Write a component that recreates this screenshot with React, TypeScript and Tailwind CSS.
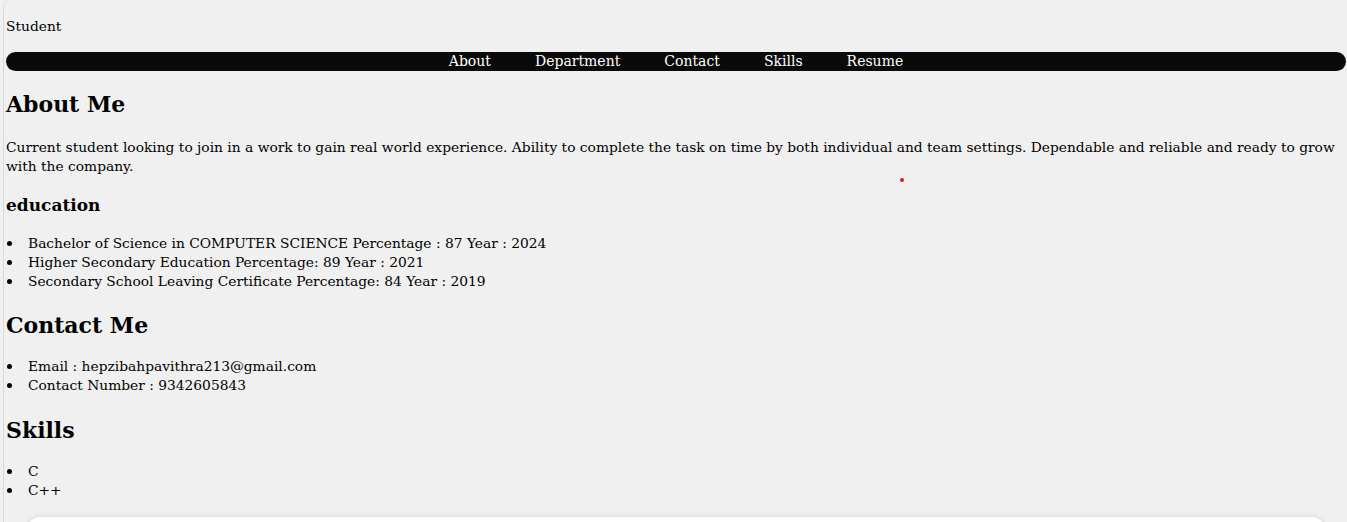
const navLinks = ["About", "Department", "Contact", "Skills", "Resume"];

const education = [
  "Bachelor of Science in COMPUTER SCIENCE Percentage : 87 Year : 2024",
  "Higher Secondary Education Percentage: 89 Year : 2021",
  "Secondary School Leaving Certificate Percentage: 84 Year : 2019",
];

const contacts = ["Email : hepzibahpavithra213@gmail.com", "Contact Number : 9342605843"];

const skills = ["C", "C++"];

function BulletList({ items, className = "" }: { items: string[]; className?: string }) {
  return (
    <ul className={`m-0 p-0 list-none ${className}`}>
      {items.map((item) => (
        <li key={item} className="flex items-center leading-[19px]">
          <span className="ml-[1px] mr-[16px] h-[5px] w-[5px] shrink-0 rounded-full bg-black" />
          <span>{item}</span>
        </li>
      ))}
    </ul>
  );
}

export default function App() {
  return (
    <div className="h-screen overflow-hidden bg-[#f0f0f0] text-black font-['DejaVu_Serif',serif] text-[13.8px]">
      <div className="relative ml-[3px] h-full border-l border-[#dadada] rounded-tl-[8px] pl-[2px] pr-[1px] pt-[17px]">
        <p className="m-0 leading-[19px]">Student</p>

        <nav className="mt-[16px] flex h-[19px] items-center justify-center gap-[44px] rounded-full bg-[#0a0a0a] text-[14px]">
          {navLinks.map((link) => (
            <a key={link} href="#" className="leading-[19px] text-white no-underline">
              {link}
            </a>
          ))}
        </nav>

        <h2 className="mt-[20px] mb-0 text-[22px] font-bold leading-[27px]">About Me</h2>
        <p className="mt-[20px] mb-0 leading-[19px]">
          Current student looking to join in a work to gain real world experience. Ability to complete the task on
          time by both individual and team settings. Dependable and reliable and ready to grow with the company.
        </p>

        <h3 className="mt-[19px] mb-0 text-[17px] font-bold leading-[21px]">education</h3>
        <BulletList items={education} className="mt-[18px]" />

        <h2 className="mt-[21px] mb-0 text-[22px] font-bold leading-[27px]">Contact Me</h2>
        <BulletList items={contacts} className="mt-[18px]" />

        <h2 className="mt-[22px] mb-0 text-[22px] font-bold leading-[27px]">Skills</h2>
        <BulletList items={skills} className="mt-[18px]" />

        <div className="mx-[19px] mt-[17px] h-[80px] rounded-[16px] bg-white shadow-[0_0_6px_rgba(0,0,0,0.12)]" />

        <span className="absolute left-[896px] top-[178px] h-[4px] w-[4px] rounded-full bg-[#e8101c]" />
      </div>
    </div>
  );
}
